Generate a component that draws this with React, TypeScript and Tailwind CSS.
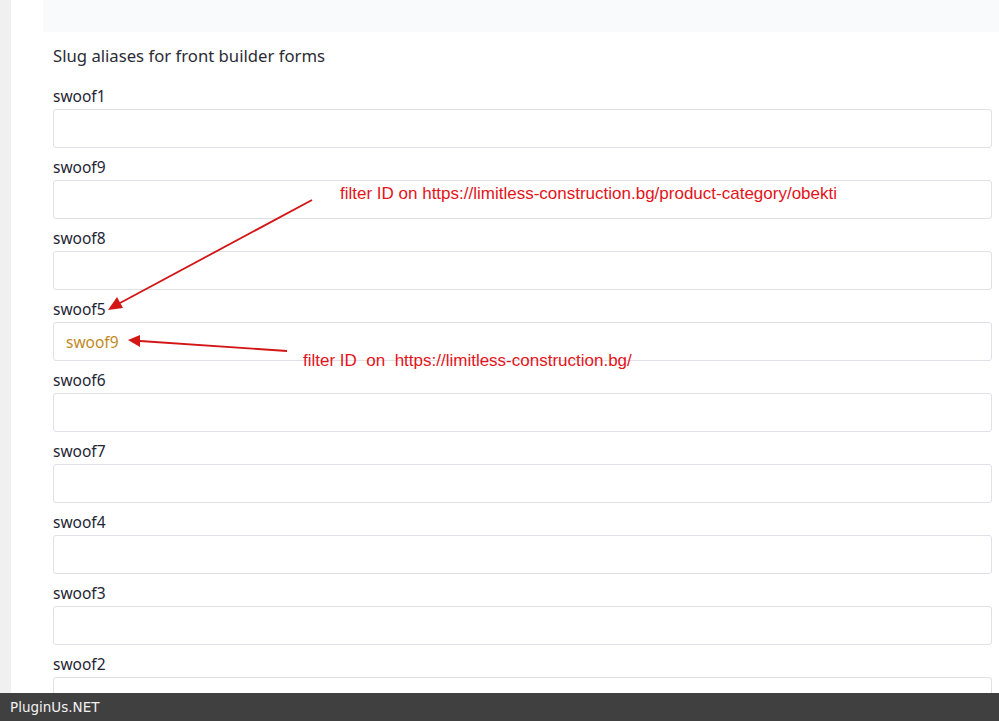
import React from 'react';

const fields: { label: string; value?: string }[] = [
  { label: 'swoof1' },
  { label: 'swoof9' },
  { label: 'swoof8' },
  { label: 'swoof5', value: 'swoof9' },
  { label: 'swoof6' },
  { label: 'swoof7' },
  { label: 'swoof4' },
  { label: 'swoof3' },
  { label: 'swoof2' },
];

const App: React.FC = () => {
  return (
    <div className="relative h-[721px] w-[999px] overflow-hidden bg-white flex" style={{ fontFamily: '"Noto Sans", "Open Sans", sans-serif' }}>
      <div className="w-[11px] shrink-0 bg-[#f0f0f0]" />
      <div className="flex-1 pl-[32px]">
        <div className="h-[32px] bg-[#f9fafc]" />
        <div className="pl-[10px] pr-[7px]">
          <h3 className="mt-[12px] mb-[18px] text-[16.7px] leading-[24px] text-[#2c2c36]">Slug aliases for front builder forms</h3>
          {fields.map((f) => (
            <div key={f.label} className="mb-[9px]">
              <label className="block text-[15.5px] leading-[20px] text-[#1e2535] mb-[3px]">{f.label}</label>
              <input
                type="text"
                defaultValue={f.value ?? ''}
                className="block w-full h-[39px] border border-[#dfe1e6] rounded-[3px] px-[12px] text-[15.5px] text-[#bf8a1e] outline-none"
              />
            </div>
          ))}
        </div>
      </div>

      {/* annotations */}
      <div className="absolute left-[340px] top-[184px] text-[17px] leading-[20px] text-[#e3141b]" style={{ fontFamily: '"Liberation Sans", sans-serif' }}>
        filter ID on https://limitless-construction.bg/product-category/obekti
      </div>
      <div className="absolute left-[303px] top-[351px] text-[17px] leading-[20px] text-[#e3141b] whitespace-pre" style={{ fontFamily: '"Liberation Sans", sans-serif' }}>
        {'filter ID  on  https://limitless-construction.bg/'}
      </div>
      <svg className="absolute left-0 top-0 pointer-events-none" width="999" height="721">
        <line x1="312" y1="200" x2="120" y2="303" stroke="#d41515" strokeWidth="1.8" />
        <polygon points="108,310 117,297 123,308" fill="#d41515" />
        <line x1="287" y1="351" x2="140" y2="341" stroke="#d41515" strokeWidth="1.8" />
        <polygon points="128,340 140,335 140,347" fill="#d41515" />
      </svg>

      <div className="absolute left-0 bottom-0 w-full h-[28px] bg-[#404040] flex items-center px-[10px]">
        <span className="text-[13.5px] text-[#f2f2f2]" style={{ fontFamily: '"DejaVu Sans", sans-serif' }}>PluginUs.NET</span>
      </div>
    </div>
  );
};

export default App;
